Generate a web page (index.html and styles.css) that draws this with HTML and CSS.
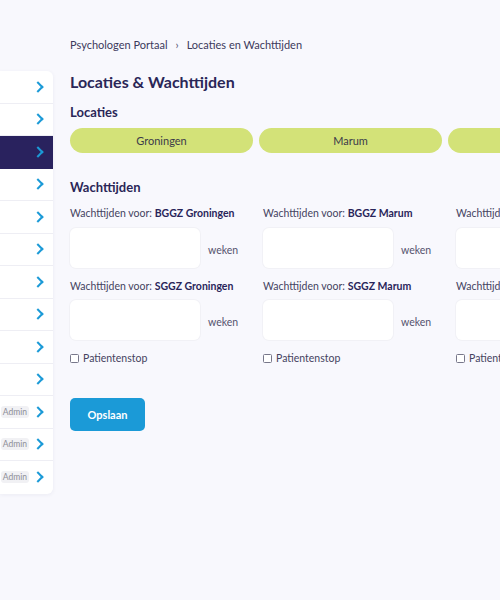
FILE: index.html
```html
<!DOCTYPE html>
<html lang="nl">
<head>
<meta charset="utf-8">
<title>Locaties &amp; Wachttijden</title>
<link rel="stylesheet" href="styles.css">
</head>
<body>
<div class="page">
  <nav class="sidebar">
    <div class="row"><span class="chev"></span></div>
    <div class="row"><span class="chev"></span></div>
    <div class="row active"><span class="chev"></span></div>
    <div class="row"><span class="chev"></span></div>
    <div class="row"><span class="chev"></span></div>
    <div class="row"><span class="chev"></span></div>
    <div class="row"><span class="chev"></span></div>
    <div class="row"><span class="chev"></span></div>
    <div class="row"><span class="chev"></span></div>
    <div class="row"><span class="chev"></span></div>
    <div class="row"><span class="badge">Admin</span><span class="chev"></span></div>
    <div class="row"><span class="badge">Admin</span><span class="chev"></span></div>
    <div class="row last"><span class="badge">Admin</span><span class="chev"></span></div>
  </nav>
  <main class="main">
    <div class="crumbs"><span>Psychologen Portaal</span><span class="sep">›</span><span>Locaties en Wachttijden</span></div>
    <h1 class="title">Locaties &amp; Wachttijden</h1>
    <h2 class="sub">Locaties</h2>
    <div class="pills">
      <div class="pill">Groningen</div>
      <div class="pill">Marum</div>
      <div class="pill">Winsum</div>
    </div>
    <h2 class="sub wt">Wachttijden</h2>
    <div class="cols">
      <div class="col">
        <div class="label">Wachttijden voor: <b>BGGZ Groningen</b></div>
        <div class="field"><div class="box"></div><span class="unit">weken</span></div>
        <div class="label l2">Wachttijden voor: <b>SGGZ Groningen</b></div>
        <div class="field f2"><div class="box"></div><span class="unit">weken</span></div>
        <label class="check"><span class="cb"></span>Patientenstop</label>
      </div>
      <div class="col">
        <div class="label">Wachttijden voor: <b>BGGZ Marum</b></div>
        <div class="field"><div class="box"></div><span class="unit">weken</span></div>
        <div class="label l2">Wachttijden voor: <b>SGGZ Marum</b></div>
        <div class="field f2"><div class="box"></div><span class="unit">weken</span></div>
        <label class="check"><span class="cb"></span>Patientenstop</label>
      </div>
      <div class="col">
        <div class="label">Wachttijden voor: <b>BGGZ Winsum</b></div>
        <div class="field"><div class="box"></div><span class="unit">weken</span></div>
        <div class="label l2">Wachttijden voor: <b>SGGZ Winsum</b></div>
        <div class="field f2"><div class="box"></div><span class="unit">weken</span></div>
        <label class="check"><span class="cb"></span>Patientenstop</label>
      </div>
    </div>
    <button class="save">Opslaan</button>
  </main>
</div>
</body>
</html>
```
FILE: styles.css
```css
html, body {
  margin: 0;
  padding: 0;
  background: #f8f8fd;
  overflow: hidden;
  width: 500px;
  height: 600px;
}
body {
  font-family: "Lato", "Liberation Sans", sans-serif;
  color: #2b2758;
}
.page {
  display: flex;
  align-items: flex-start;
  gap: 17px;
  width: 800px;
}
.sidebar {
  flex: 0 0 53px;
  margin-top: 71px;
  background: #fff;
  border-radius: 0 6px 6px 0;
  box-shadow: 0 1px 4px rgba(40, 40, 90, 0.06);
  overflow: hidden;
}
.row {
  height: 32.5px;
  box-sizing: border-box;
  border-bottom: 1px solid #eeeef4;
  display: flex;
  align-items: center;
  justify-content: flex-end;
  padding-right: 11px;
  gap: 5px;
}
.row.last { border-bottom: none; }
.row.active {
  background: #29225e;
  border-bottom-color: #29225e;
}
.chev {
  width: 6px;
  height: 6px;
  border-top: 2px solid #1b9ad7;
  border-right: 2px solid #1b9ad7;
  transform: rotate(45deg);
}
.badge {
  font-size: 8.5px;
  color: #8d8d96;
  background: #f1f1f4;
  border-radius: 3px;
  padding: 1px 2px;
  line-height: 10px;
}
.main {
  flex: 1 1 auto;
  padding-top: 37px;
}
.crumbs {
  font-size: 11px;
  line-height: 16px;
  height: 16px;
  color: #3c3a5c;
  display: flex;
  gap: 8px;
}
.crumbs .sep { color: #55536f; }
.title {
  margin: 18px 0 0;
  font-size: 16px;
  line-height: 22px;
  font-weight: 700;
  color: #2a2657;
}
.sub {
  margin: 10px 0 0;
  font-size: 13px;
  line-height: 18px;
  font-weight: 700;
  color: #2a2657;
}
.sub.wt { margin-top: 25px; }
.pills {
  margin-top: 7px;
  display: grid;
  grid-template-columns: repeat(3, 183px);
  gap: 6px;
}
.pill {
  height: 25px;
  border-radius: 13px;
  background: #d3e278;
  font-size: 11px;
  line-height: 25px;
  text-align: center;
  color: #3b3a4a;
}
.cols {
  display: grid;
  grid-template-columns: repeat(3, 193px);
}
.label {
  margin-top: 10px;
  font-size: 10.5px;
  line-height: 14px;
  color: #45435f;
  white-space: nowrap;
}
.label b { color: #29255a; font-weight: 700; }
.label.l2 { margin-top: 11px; }
.field {
  margin-top: 8px;
  display: flex;
  align-items: center;
  gap: 8px;
}
.field.f2 { margin-top: 7px; }
.box {
  width: 130px;
  height: 40px;
  background: #fff;
  border-radius: 6px;
  box-shadow: 0 0 0 1px #f1f1f6;
}
.unit {
  font-size: 10.5px;
  color: #55536e;
  padding-top: 3px;
}
.check {
  margin-top: 11px;
  display: flex;
  align-items: center;
  gap: 4px;
  font-size: 10.5px;
  line-height: 14px;
  color: #45435f;
}
.cb {
  width: 7px;
  height: 7px;
  border: 1px solid #77778a;
  border-radius: 1.5px;
  background: #fff;
}
.save {
  margin-top: 33px;
  width: 75px;
  height: 33px;
  border: none;
  border-radius: 5px;
  background: #1b9ad7;
  color: #fff;
  font-family: inherit;
  font-size: 11px;
  font-weight: 700;
  padding: 0;
}
```
